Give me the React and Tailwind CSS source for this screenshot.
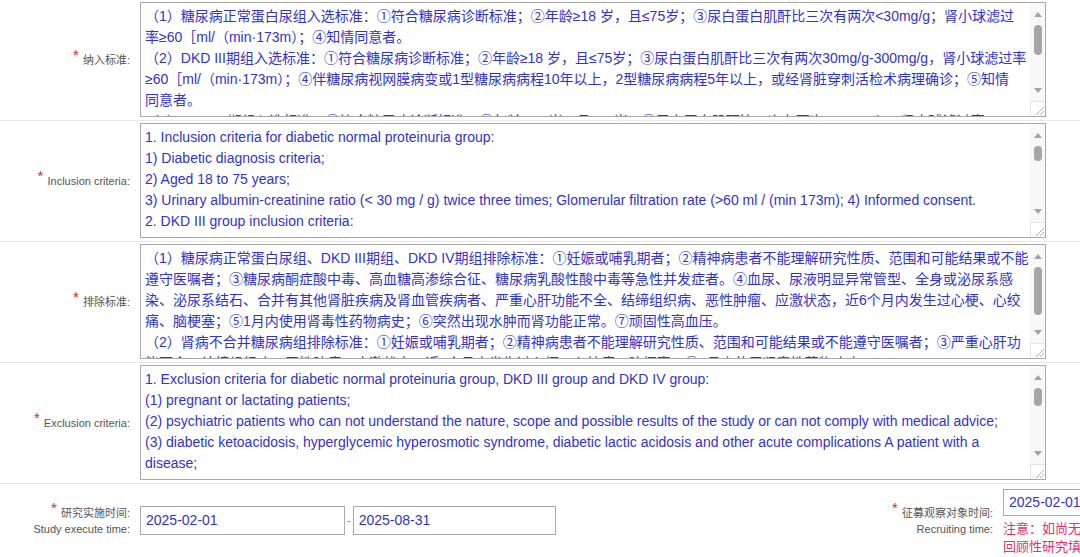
import React from 'react';

const rows = [
  {
    label: '纳入标准:',
    thumb: 30,
    lines: [
      '（1）糖尿病正常蛋白尿组入选标准：①符合糖尿病诊断标准；②年龄≥18 岁，且≤75岁；③尿白蛋白肌酐比三次有两次<30mg/g；肾小球滤过',
      '率≥60［ml/（min·173m）；④知情同意者。',
      '（2）DKD III期组入选标准：①符合糖尿病诊断标准；②年龄≥18 岁，且≤75岁；③尿白蛋白肌酐比三次有两次30mg/g-300mg/g，肾小球滤过率',
      '≥60［ml/（min·173m）；④伴糖尿病视网膜病变或1型糖尿病病程10年以上，2型糖尿病病程5年以上，或经肾脏穿刺活检术病理确诊；⑤知情',
      '同意者。',
      '（3）DKD IV期组入选标准：①符合糖尿病诊断标准；②年龄≥18 岁，且≤75岁；③尿白蛋白肌酐比三次有两次>300mg/g；肾小球滤过率',
    ],
  },
  {
    label: 'Inclusion criteria:',
    thumb: 15,
    lines: [
      '1. Inclusion criteria for diabetic normal proteinuria group:',
      '1) Diabetic diagnosis criteria;',
      '2) Aged 18 to 75 years;',
      '3) Urinary albumin-creatinine ratio (< 30 mg / g) twice three times; Glomerular filtration rate (>60 ml / (min 173m); 4) Informed consent.',
      '2. DKD III group inclusion criteria:',
    ],
  },
  {
    label: '排除标准:',
    thumb: 48,
    lines: [
      '（1）糖尿病正常蛋白尿组、DKD III期组、DKD IV期组排除标准：①妊娠或哺乳期者；②精神病患者不能理解研究性质、范围和可能结果或不能',
      '遵守医嘱者；③糖尿病酮症酸中毒、高血糖高渗综合征、糖尿病乳酸性酸中毒等急性并发症者。④血尿、尿液明显异常管型、全身或泌尿系感',
      '染、泌尿系结石、合并有其他肾脏疾病及肾血管疾病者、严重心肝功能不全、结缔组织病、恶性肿瘤、应激状态，近6个月内发生过心梗、心绞',
      '痛、脑梗塞；⑤1月内使用肾毒性药物病史；⑥突然出现水肿而肾功能正常。⑦顽固性高血压。',
      '（2）肾病不合并糖尿病组排除标准：①妊娠或哺乳期者；②精神病患者不能理解研究性质、范围和可能结果或不能遵守医嘱者；③严重心肝功',
      '能不全、结缔组织病、恶性肿瘤、应激状态，近6个月内发生过心梗、心绞痛、脑梗塞；④1月内使用肾毒性药物病史。',
    ],
  },
  {
    label: 'Exclusion criteria:',
    thumb: 18,
    lines: [
      '1. Exclusion criteria for diabetic normal proteinuria group, DKD III group and DKD IV group:',
      '(1) pregnant or lactating patients;',
      '(2) psychiatric patients who can not understand the nature, scope and possible results of the study or can not comply with medical advice;',
      '(3) diabetic ketoacidosis, hyperglycemic hyperosmotic syndrome, diabetic lactic acidosis and other acute complications A patient with a',
      'disease;',
    ],
  },
];

function Star() {
  return <span className="relative -top-[4px] mr-[4px] text-[15px] leading-none text-[#e02424]">*</span>;
}

function Scrollbar({ thumb }) {
  return (
    <div className="flex w-[15px] shrink-0 flex-col bg-[#f8f8f8]">
      <div className="flex h-[22px] items-center justify-center">
        <svg width="8" height="5" viewBox="0 0 8 5">
          <path d="M0 5 L4 0 L8 5 Z" fill="#a3a3a3" />
        </svg>
      </div>
      <div className="flex-1">
        <div className="mx-auto w-[8px] rounded-full bg-[#a6a6a6]" style={{ height: thumb }} />
      </div>
      <div className="flex h-[22px] items-center justify-center">
        <svg width="8" height="5" viewBox="0 0 8 5">
          <path d="M0 0 L4 5 L8 0 Z" fill="#a3a3a3" />
        </svg>
      </div>
      <div className="h-[15px] border-l border-t border-[#e4e4e4] bg-white">
        <svg width="14" height="14" viewBox="0 0 14 14">
          <path d="M5 13 L13 5 M9 13 L13 9" stroke="#b0b0b0" strokeWidth="1" />
        </svg>
      </div>
    </div>
  );
}

function Row({ row }) {
  return (
    <div className="flex items-center border-b border-[#e8e8e8] pt-[2px] pb-[3px]">
      <div className="w-[130px] shrink-0 text-right text-[11px] text-[#555]">
        <Star />
        {row.label}
      </div>
      <div className="ml-[10px] flex h-[115px] w-[906px] border border-[#a9a9a9] bg-white">
        <div className="flex-1 overflow-hidden whitespace-nowrap px-[4px] pt-[3px] text-[14px] leading-[21px] text-[#3333c4]">
          {row.lines.map((line, i) => (
            <div key={i}>{line}</div>
          ))}
        </div>
        <Scrollbar thumb={row.thumb} />
      </div>
    </div>
  );
}

export default function App() {
  return (
    <div className="h-[557px] w-[1080px] overflow-hidden bg-white font-[Liberation_Sans,Noto_Sans_CJK_SC,sans-serif]">
      {rows.map((row, i) => (
        <Row key={i} row={row} />
      ))}

      {/* dates */}
      <div className="flex pt-[5px]">
        <div className="mt-[15px] flex w-[863px] shrink-0 items-center self-start">
          <div className="w-[130px] shrink-0 text-right text-[11px] leading-[16px] text-[#555]">
            <div>
              <Star />
              研究实施时间:
            </div>
            <div>Study execute time:</div>
          </div>
          <div className="ml-[10px] flex h-[29px] w-[205px] items-center border border-[#a9a9a9] px-[5px] text-[14px] text-[#3333c4]">
            2025-02-01
          </div>
          <span className="mx-[2px] text-[11px] text-[#777]">-</span>
          <div className="flex h-[29px] w-[203px] items-center border border-[#a9a9a9] px-[5px] text-[14px] text-[#3333c4]">
            2025-08-31
          </div>
        </div>
        <div className="flex">
          <div className="mt-[15px] w-[130px] shrink-0 text-right text-[11px] leading-[16px] text-[#555]">
            <div className="whitespace-nowrap">
              <Star />
              征募观察对象时间:
            </div>
            <div>Recruiting time:</div>
          </div>
          <div className="ml-[10px] w-[210px] shrink-0">
            <div className="flex h-[27px] items-center border border-[#a9a9a9] px-[5px] text-[14px] text-[#3333c4]">
              2025-02-01
            </div>
            <div className="mt-[4px] whitespace-nowrap text-[13px] leading-[18px] text-[#e0336c]">
              <div>注意：如尚无确切时间，请填写预计时间；</div>
              <div>回顾性研究填写病例收集时间。</div>
            </div>
          </div>
        </div>
      </div>
    </div>
  );
}
